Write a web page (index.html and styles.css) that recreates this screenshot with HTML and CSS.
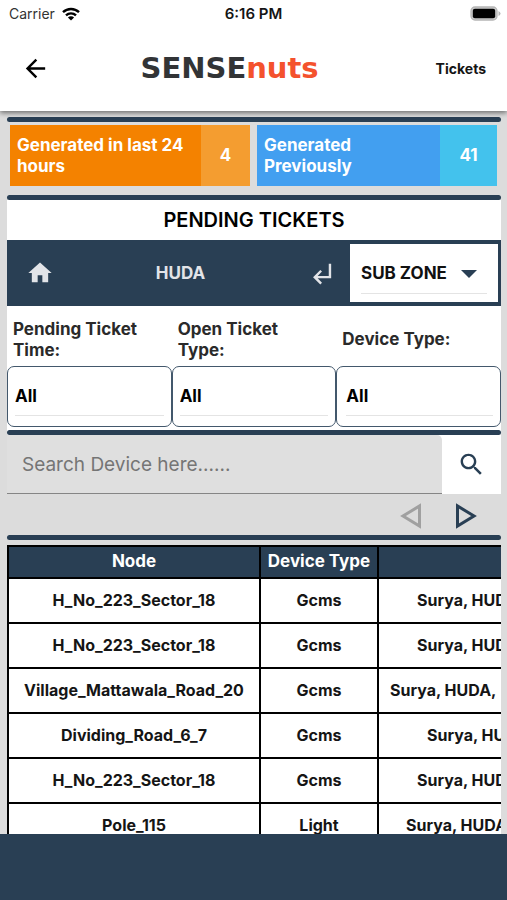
FILE: index.html
```
<!DOCTYPE html>
<html lang="en">
<head>
<meta charset="utf-8">
<meta name="viewport" content="width=device-width, initial-scale=1">
<title>SENSEnuts Tickets</title>
<link rel="stylesheet" href="styles.css">
</head>
<body>
<div class="app">
  <header class="header">
    <div class="status">
      <div class="carrier">Carrier
        <svg width="18" height="14" viewBox="0 0 18 14"><g fill="none" stroke="#000" stroke-width="2.4"><path d="M1 5.2a11.5 11.5 0 0 1 16 0"/><path d="M4 8.4a7.2 7.2 0 0 1 10 0"/></g><path d="M9 13.6 5.9 10.6a4.4 4.4 0 0 1 6.2 0z"/></svg>
      </div>
      <div class="time">6:16 PM</div>
      <div class="battery">
        <svg width="31" height="15" viewBox="0 0 31 15"><rect x="1" y="1" width="26" height="13" rx="4" fill="#ccc" stroke="#b5b5b5" stroke-width="1.3"/><rect x="2.8" y="2.8" width="22.4" height="9.4" rx="2"/><path d="M28.5 5v5q2-1 2-2.5t-2-2.5z" fill="#b5b5b5"/></svg>
      </div>
    </div>
    <div class="toolbar">
      <button class="icon-button back" aria-label="Back"><svg width="29" height="29" viewBox="0 0 24 24"><path d="M20 11H7.83l5.59-5.59L12 4l-8 8 8 8 1.41-1.41L7.83 13H20v-2z"/></svg></button>
      <div class="logo">SENSE<span>nuts</span></div>
      <div class="page-name">Tickets</div>
    </div>
  </header>

  <main class="content">
    <div class="rule"></div>
    <section class="cards">
      <div class="card orange"><div class="card-label">Generated in last 24 hours</div><div class="card-count">4</div></div>
      <div class="card blue"><div class="card-label">Generated Previously</div><div class="card-count">41</div></div>
    </section>
    <div class="rule"></div>
    <section class="panel">
      <h1>PENDING TICKETS</h1>
      <nav class="zone">
        <button class="icon-button home" aria-label="Home"><svg width="28" height="28" viewBox="0 0 24 24"><path d="M10 20v-6h4v6h5v-8h3L12 3 2 12h3v8z"/></svg></button>
        <div class="zone-name">HUDA</div>
        <button class="icon-button up" aria-label="Up one level"><svg width="29" height="29" viewBox="0 0 24 24"><path d="M11 9l1.42 1.42L8.83 14H18V4h2v12H8.83l3.59 3.58L11 21l-6-6 6-6z"/></svg></button>
        <div class="zone-select">
          <select aria-label="Sub zone"><option>SUB ZONE</option></select>
          <svg class="caret" width="16" height="8" viewBox="0 0 16 8"><path d="M0 0h16L8 8z"/></svg>
        </div>
      </nav>
      <div class="filters">
        <div class="filter"><label for="time">Pending Ticket Time:</label><div class="box"><select id="time"><option>All</option></select></div></div>
        <div class="filter"><label for="open">Open Ticket Type:</label><div class="box"><select id="open"><option>All</option></select></div></div>
        <div class="filter"><label for="device">Device Type:</label><div class="box"><select id="device"><option>All</option></select></div></div>
      </div>
      <div class="rule"></div>
      <form class="search">
        <input type="text" placeholder="Search Device here......" aria-label="Search device">
        <button type="button" aria-label="Search"><svg width="29" height="29" viewBox="0 0 24 24"><path d="M15.5 14h-.79l-.28-.27C15.41 12.59 16 11.11 16 9.5 16 5.91 13.09 3 9.5 3S3 5.91 3 9.5 5.91 16 9.5 16c1.61 0 3.09-.59 4.23-1.57l.27.28v.79l5 4.99L20.49 19l-4.99-5zm-6 0C7.01 14 5 11.99 5 9.5S7.01 5 9.5 5 14 7.01 14 9.5 11.99 14 9.5 14z"/></svg></button>
      </form>
    </section>
    <div class="pager">
      <button class="icon-button prev" aria-label="Previous page"><svg width="22" height="26" viewBox="0 0 22 26"><path d="M19.5 3v20L3 13z"/></svg></button>
      <button class="icon-button next" aria-label="Next page"><svg width="22" height="26" viewBox="0 0 22 26"><path d="M2.5 3v20L19 13z"/></svg></button>
    </div>
    <div class="rule"></div>
    <div class="table-wrap">
      <table>
        <colgroup><col class="col-node"><col class="col-type"><col class="col-zone"></colgroup>
        <thead><tr><th>Node</th><th>Device Type</th><th></th></tr></thead>
        <tbody>
          <tr><td>H_No_223_Sector_18</td><td>Gcms</td><td class="zone-cell mid">Surya, HUDA</td></tr>
          <tr><td>H_No_223_Sector_18</td><td>Gcms</td><td class="zone-cell mid">Surya, HUDA</td></tr>
          <tr><td>Village_Mattawala_Road_20</td><td>Gcms</td><td class="zone-cell wide">Surya, HUDA,</td></tr>
          <tr><td>Dividing_Road_6_7</td><td>Gcms</td><td class="zone-cell short">Surya, HUDA</td></tr>
          <tr><td>H_No_223_Sector_18</td><td>Gcms</td><td class="zone-cell mid">Surya, HUDA</td></tr>
          <tr><td>Pole_115</td><td>Light</td><td class="zone-cell long">Surya, HUDA</td></tr>
        </tbody>
      </table>
    </div>
  </main>
  <footer class="footer"></footer>
</div>
</body>
</html>
```
FILE: styles.css
```
* { box-sizing: border-box; }
body { margin: 0; font-family: Inter, "Liberation Sans", sans-serif; font-weight: 700; color: #151515; background: #dcdcdc; }
button, input, select { font: inherit; color: inherit; border: 0; padding: 0; margin: 0; background: none; border-radius: 0; }
svg { display: block; }
.app { height: 100vh; display: flex; flex-direction: column; overflow: hidden; }

.header { position: relative; background: #fff; box-shadow: 0 2px 5px rgba(0, 0, 0, .5); flex: none; }
.status { display: grid; grid-template-columns: 1fr auto 1fr; align-items: center; height: 27px; padding: 0 6px 0 6px; font-size: 14px; }
.carrier { display: flex; align-items: center; gap: 7px; padding-left: 3px; font-weight: 400; color: #333; }
.time { font-size: 15px; font-weight: 600; }
.battery { justify-self: end; }
.toolbar { display: grid; grid-template-columns: 5fr auto 7fr; align-items: center; height: 84px; padding: 0 21px 2px; }
.icon-button { display: grid; place-items: center; }
.back { justify-self: start; }
.logo { font: bold 29px/36px "DejaVu Sans", sans-serif; color: #323436; }
.logo span { color: #f4522d; }
.page-name { justify-self: end; font-size: 14px; }

.content { flex: 1; min-height: 0; display: flex; flex-direction: column; padding: 6px 6px 0 7px; }
.rule { flex: none; height: 5px; border-radius: 3px; background: #293f54; }
.cards { flex: none; display: grid; grid-template-columns: 1fr 1fr; gap: 7px; padding: 3px 4px 9px 3px; color: #fff; font-size: 17px; line-height: 21px; }
.card { display: flex; height: 61px; }
.card-label { flex: 1; display: flex; align-items: center; padding: 0 7px; }
.card-count { display: grid; place-items: center; }
.orange { background: #f48200; }
.orange .card-count { width: 49px; background: #f49d30; }
.blue { background: #429ff0; }
.blue .card-count { width: 57px; background: #43c2ed; }

.panel { flex: none; background: #fff; }
h1 { margin: 0; text-align: center; font-size: 20px; line-height: 40px; font-weight: 600; color: #000; }
.zone { display: flex; align-items: center; height: 66px; padding: 4px 3px 4px 19px; background: #293f54; color: #e2e4e8; font-size: 17px; }
.zone svg { fill: #e2e4e8; }
.zone-name { flex: 1; text-align: center; }
.up { padding-right: 14px; }
.zone-select { position: relative; align-self: stretch; width: 148px; padding: 8px 11px; background: #fff; color: #111; }
select { appearance: none; width: 100%; height: 100%; border-bottom: 1px solid #e4e4e4; }
.zone-select .caret { position: absolute; right: 21px; top: 26px; fill: #293f54; pointer-events: none; }
.filters { display: grid; grid-template-columns: 1fr 1fr 1fr; padding-bottom: 3px; color: #2a2a2a; font-size: 17px; line-height: 21px; }
label { display: flex; align-items: center; height: 60px; padding: 7px 20px 0 6px; }
.filter:last-child label { padding-right: 0; }
.box { height: 61px; padding: 10px 7px; border: 1px solid #43586c; border-radius: 7px; color: #000; }
.filter:last-child .box { padding-left: 9px; }

.search { display: flex; height: 59px; font-weight: 400; }
.search input { flex: 1; min-width: 0; padding: 0 15px; background: #dfdfdf; border-bottom: 1px solid #858585; border-radius: 0 5px 0 0; font-size: 19px; }
.search input::placeholder { color: #757575; opacity: 1; }
.search button { display: grid; place-items: center; width: 59px; }
.search svg { fill: #293f54; }
.pager { flex: none; display: flex; justify-content: flex-end; align-items: center; gap: 33px; height: 41px; padding: 2px 24px 0 0; }
.pager path { fill: none; stroke: #293f54; stroke-width: 3; }
.pager .prev path { stroke: #a0a0a0; }

.table-wrap { flex: 1; min-height: 0; overflow: hidden; margin-top: 5px; }
table { table-layout: fixed; width: 710px; border-collapse: collapse; background: #fff; font-size: 16px; }
.col-node { width: 252px; }
.col-type { width: 118px; }
th, td { height: 45px; padding: 0 4px 2px; border: 2px solid #000; text-align: center; font-weight: inherit; white-space: nowrap; }
th { height: 32px; background: #293f54; color: #fff; font-size: 17px; }
.zone-cell { text-align: left; }
.zone-cell.wide { padding-left: 11px; }
.zone-cell.long { padding-left: 27px; }
.zone-cell.mid { padding-left: 38px; }
.zone-cell.short { padding-left: 48px; }
.footer { flex: none; height: 66px; background: #293f54; }
```
